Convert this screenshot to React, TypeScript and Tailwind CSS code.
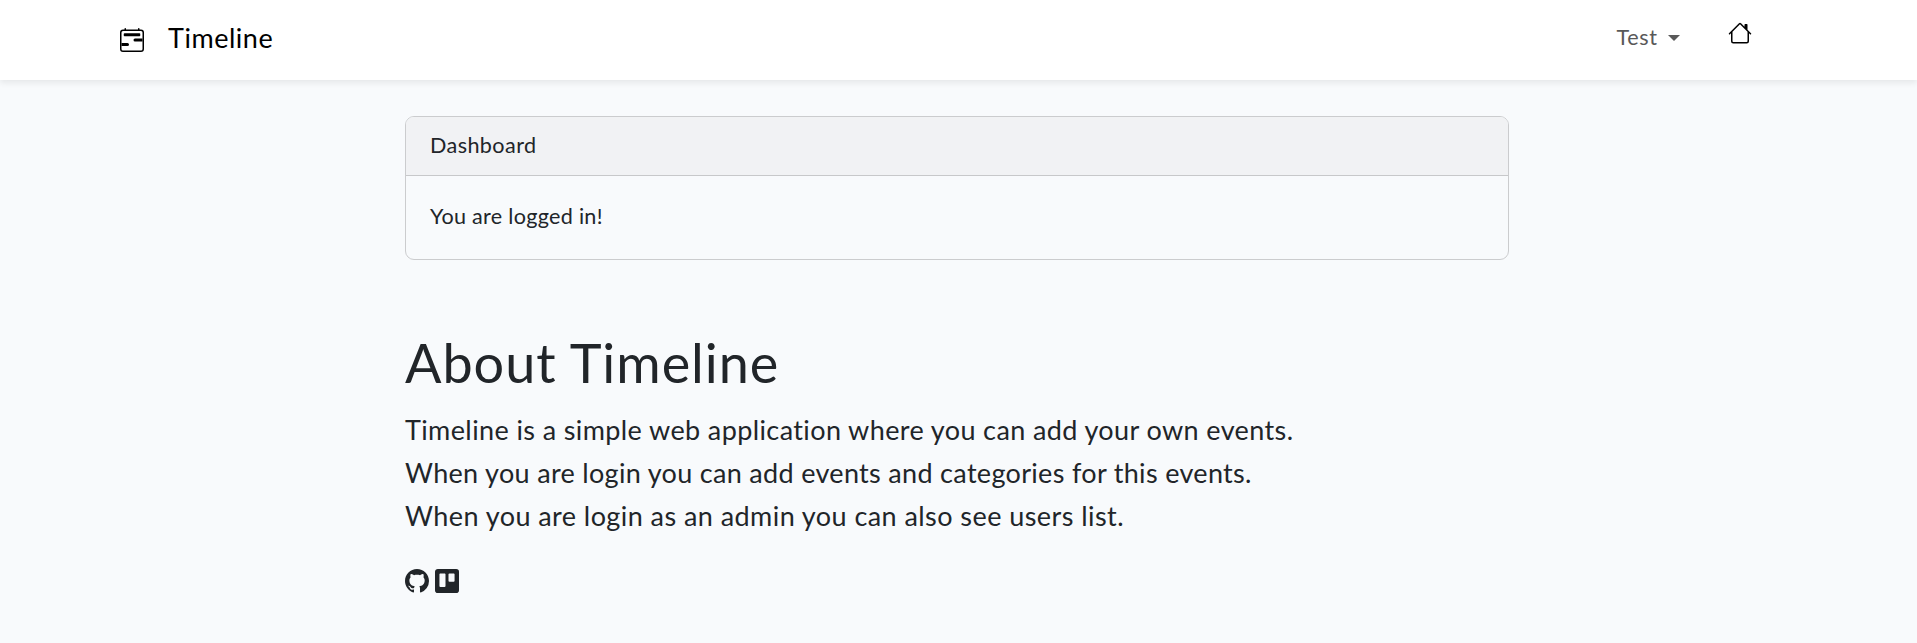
import { BsCalendar2Range, BsGithub, BsHouse, BsTrello } from "react-icons/bs";

function Navbar() {
  return (
    <nav className="flex h-20 items-start bg-white pr-[165px] pl-[120px] shadow-[0_3px_6px_rgba(0,0,0,0.075)]">
      <a href="#" className="flex items-start text-black">
        <BsCalendar2Range className="mt-7 size-6" />
        <span className="mt-4 ml-6 text-[27px] leading-[43px] tracking-[0.53px]">Timeline</span>
      </a>
      <div className="ml-auto flex items-start">
        <a href="#" className="mt-5 flex items-center text-[21.6px] leading-[35px] tracking-[0.6px] text-[#595959]">
          Test
          <span className="ml-[10.5px] border-x-[6px] border-t-[6px] border-x-transparent border-t-[#595959]" />
        </a>
        <a href="#" className="mt-[21px] ml-12 text-black">
          <BsHouse className="size-6" />
        </a>
      </div>
    </nav>
  );
}

export default function App() {
  return (
    <div className="min-h-screen bg-[#f8fafc] font-['Lato',sans-serif] text-[#212529]">
      <Navbar />
      <main className="ml-[405px] w-[1104px] pt-9">
        <section className="h-36 overflow-hidden rounded-[9px] border border-[#cbccce] text-[21.6px] leading-[34px]">
          <header className="h-[59px] border-b border-[#c7c8ca] bg-[#f1f2f4] px-6 pt-[11px] tracking-[0.4px]">Dashboard</header>
          <p className="px-6 pt-[23px] tracking-[0.29px]">You are logged in!</p>
        </section>
        <h1 className="mt-[70px] text-[54px] leading-[65px] tracking-[0.95px]">About Timeline</h1>
        <div className="mt-[13px] text-[27px] leading-[43.2px]">
          <p className="tracking-[0.39px]">Timeline is a simple web application where you can add your own events.</p>
          <p className="tracking-[0.32px]">When you are login you can add events and categories for this events.</p>
          <p className="tracking-[0.44px]">When you are login as an admin you can also see users list.</p>
        </div>
        <div className="mt-[31px] flex gap-1.5">
          <a href="#"><BsGithub className="size-6" /></a>
          <a href="#"><BsTrello className="size-6" /></a>
        </div>
      </main>
    </div>
  );
}
